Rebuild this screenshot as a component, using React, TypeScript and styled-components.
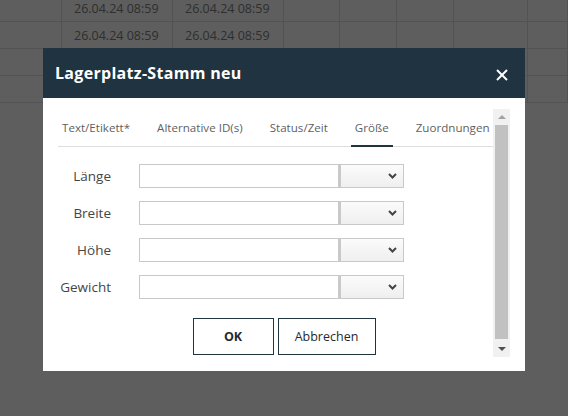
import React from 'react';
import styled, { createGlobalStyle } from 'styled-components';

const GlobalStyle = createGlobalStyle`
  html, body {
    margin: 0;
    padding: 0;
    background: #ffffff;
    overflow: hidden;
  }
  * {
    box-sizing: border-box;
  }
`;

const Page = styled.div`
  position: relative;
  width: 568px;
  height: 416px;
  overflow: hidden;
  font-family: 'Open Sans', 'Liberation Sans', sans-serif;
  background: #ffffff;
`;

const Grid = styled.div`
  margin-top: -5px;
  display: flex;
  flex-direction: column;
`;

const GridRow = styled.div`
  display: grid;
  grid-template-columns: 62px 111px 111px 56px 57px 57px 74px 1fr;
  height: 27px;
  border-bottom: 1px solid #e2e2e2;
`;

const GridCell = styled.div`
  border-right: 1px solid #e2e2e2;
  padding-left: 12px;
  display: flex;
  align-items: center;
  font-size: 12.5px;
  color: #808080;
  white-space: nowrap;
`;

const Overlay = styled.div`
  position: absolute;
  inset: 0;
  background: rgba(0, 0, 0, 0.63);
  display: flex;
  justify-content: center;
  align-items: flex-start;
  padding-top: 48px;
`;

const Modal = styled.div`
  width: 482px;
  height: 323px;
  background: #ffffff;
  display: flex;
  flex-direction: column;
`;

const Header = styled.div`
  height: 50px;
  background: #1f3340;
  display: flex;
  align-items: center;
  justify-content: space-between;
  padding: 0 17px 0 12px;
`;

const Title = styled.div`
  color: #ffffff;
  font-size: 16px;
  font-weight: 700;
  letter-spacing: 0.3px;
  margin-top: -1px;
`;

const CloseButton = styled.div`
  width: 12px;
  height: 12px;
  margin-top: 4px;
  display: flex;
`;

const Body = styled.div`
  flex: 1;
  display: flex;
  padding: 11px 15px 14px 15px;
  min-height: 0;
`;

const Content = styled.div`
  flex: 1;
  display: flex;
  flex-direction: column;
  min-width: 0;
`;

const Tabs = styled.div`
  height: 38px;
  display: flex;
  gap: 19px;
  border-bottom: 1px solid #dedede;
`;

const Tab = styled.div<{ $active?: boolean }>`
  flex-shrink: 0;
  padding: 0 4px;
  display: flex;
  align-items: center;
  font-size: 11.6px;
  color: #5f5f5f;
  white-space: nowrap;
  margin-bottom: -1px;
  border-bottom: 2px solid ${(p) => (p.$active ? '#1f3340' : 'transparent')};
  padding-top: 1px;
`;

const Form = styled.div`
  margin-top: 17px;
  display: flex;
  flex-direction: column;
  gap: 13px;
`;

const FieldRow = styled.div`
  display: flex;
  align-items: center;
  height: 24px;
`;

const Label = styled.div`
  width: 53px;
  margin-right: 28px;
  text-align: right;
  font-size: 13.5px;
  color: #454545;
  white-space: nowrap;
`;

const TextInput = styled.div`
  width: 200px;
  height: 24px;
  border: 1px solid #c9c9c9;
  background: #ffffff;
`;

const Select = styled.div`
  width: 65px;
  height: 24px;
  border: 1px solid #c9c9c9;
  border-left-width: 2px;
  background: linear-gradient(#fbfbfb, #efefef);
  display: flex;
  align-items: center;
  justify-content: flex-end;
  padding-right: 6px;
`;

const ButtonRow = styled.div`
  margin-top: 19px;
  padding-left: 17px;
  display: flex;
  justify-content: center;
  gap: 4px;
`;

const Button = styled.div<{ $w: number; $bold?: boolean }>`
  width: ${(p) => p.$w}px;
  height: 37px;
  border: 1px solid #1f3340;
  display: flex;
  align-items: center;
  justify-content: center;
  font-size: 12.5px;
  font-weight: ${(p) => (p.$bold ? 700 : 400)};
  color: #1f2a33;
`;

const Scrollbar = styled.div`
  width: 17px;
  background: #f1f1f1;
  display: flex;
  flex-direction: column;
`;

const ScrollArrow = styled.div<{ $down?: boolean; $dark?: boolean }>`
  height: 16px;
  display: flex;
  align-items: center;
  justify-content: center;
  &::after {
    content: '';
    width: 0;
    height: 0;
    border-left: 4px solid transparent;
    border-right: 4px solid transparent;
    ${(p) =>
      p.$down
        ? `border-top: 4px solid ${p.$dark ? '#505050' : '#a3a3a3'};`
        : `border-bottom: 4px solid ${p.$dark ? '#505050' : '#a3a3a3'};`}
  }
`;

const ScrollThumb = styled.div`
  flex: 1;
  margin: 0 2px 2px 2px;
  background: #c1c1c1;
`;

const Chevron = () => (
  <svg width="9" height="6" viewBox="0 0 9 6">
    <polyline points="1,1 4.5,4.5 8,1" fill="none" stroke="#444" strokeWidth="2" />
  </svg>
);

const CloseIcon = () => (
  <svg width="12" height="12" viewBox="0 0 12 12">
    <line x1="1" y1="1" x2="11" y2="11" stroke="#fff" strokeWidth="2" />
    <line x1="11" y1="1" x2="1" y2="11" stroke="#fff" strokeWidth="2" />
  </svg>
);

const rows = [
  ['', '26.04.24 08:59', '26.04.24 08:59'],
  ['', '26.04.24 08:59', '26.04.24 08:59'],
  ['', '', ''],
  ['', '', ''],
];

const tabs = ['Text/Etikett*', 'Alternative ID(s)', 'Status/Zeit', 'Größe', 'Zuordnungen'];
const fields = ['Länge', 'Breite', 'Höhe', 'Gewicht'];

export default function App() {
  return (
    <Page>
      <GlobalStyle />
      <Grid>
        {rows.map((r, i) => (
          <GridRow key={i}>
            {[...r, '', '', '', '', ''].map((c, j) => (
              <GridCell key={j}>{c}</GridCell>
            ))}
          </GridRow>
        ))}
      </Grid>
      <Overlay>
        <Modal>
          <Header>
            <Title>Lagerplatz-Stamm neu</Title>
            <CloseButton>
              <CloseIcon />
            </CloseButton>
          </Header>
          <Body>
            <Content>
              <Tabs>
                {tabs.map((t) => (
                  <Tab key={t} $active={t === 'Größe'}>
                    {t}
                  </Tab>
                ))}
              </Tabs>
              <Form>
                {fields.map((f) => (
                  <FieldRow key={f}>
                    <Label>{f}</Label>
                    <TextInput />
                    <Select>
                      <Chevron />
                    </Select>
                  </FieldRow>
                ))}
              </Form>
              <ButtonRow>
                <Button $w={81} $bold>
                  OK
                </Button>
                <Button $w={98}>Abbrechen</Button>
              </ButtonRow>
            </Content>
            <Scrollbar>
              <ScrollArrow />
              <ScrollThumb />
              <ScrollArrow $down $dark />
            </Scrollbar>
          </Body>
        </Modal>
      </Overlay>
    </Page>
  );
}
